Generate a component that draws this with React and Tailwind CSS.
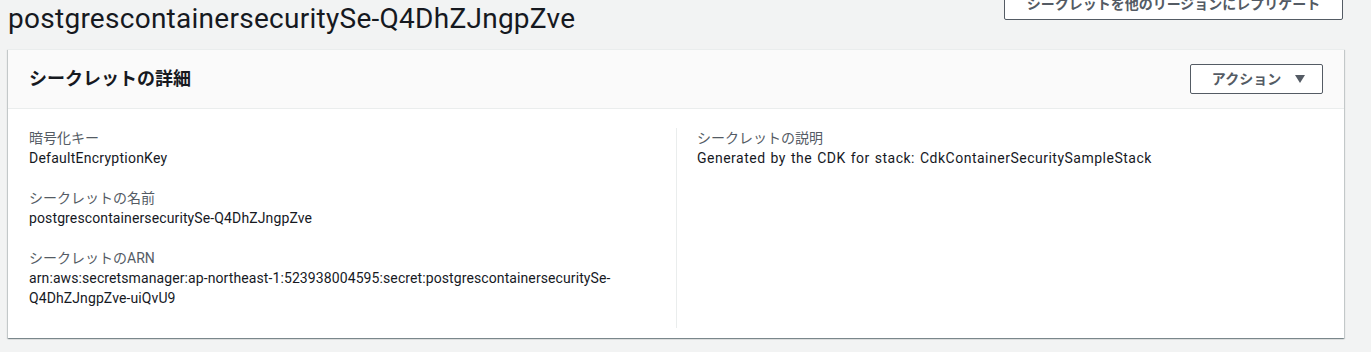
export default function App() {
  const font = { fontFamily: 'Roboto, "Noto Sans CJK JP", sans-serif' };
  return (
    <div className="min-h-[352px] w-[1371px] bg-[#f2f3f3] pl-[8px] pr-[27px] text-[#16191f]" style={font}>
      <div className="flex items-start justify-between">
        <h1 className="mt-[2px] text-[28px] leading-[34px] font-normal tracking-[0.27px] text-[#16191f]">
          postgrescontainersecuritySe-Q4DhZJngpZve
        </h1>
        <button className="-mt-[12px] mr-[1px] flex h-[32px] w-[339px] items-center justify-center rounded-[2px] border border-[#545b64] bg-white text-[14px] font-bold text-[#545b64]">
          シークレットを他のリージョンにレプリケート
        </button>
      </div>
      <div className="mt-[13px] border-t border-[#eaeded] bg-white shadow-[0_1px_1px_0_rgba(0,28,36,0.3),1px_1px_1px_0_rgba(0,28,36,0.15),-1px_1px_1px_0_rgba(0,28,36,0.15)]">
        <div className="flex h-[59px] items-center justify-between border-b border-[#eaeded] bg-[#fafafa] px-[21px]">
          <h2 className="text-[18px] font-bold leading-[22px] text-[#16191f]">シークレットの詳細</h2>
          <button className="flex h-[30px] w-[133px] items-center justify-center gap-[14px] rounded-[2px] border border-[#545b64] bg-white pl-[4px] text-[14px] font-bold text-[#545b64]">
            <span>アクション</span>
            <svg width="10" height="8" viewBox="0 0 10 8"><path d="M0 0 L10 0 L5 8 Z" fill="#545b64" /></svg>
          </button>
        </div>
        <div className="grid grid-cols-2 px-[21px] pt-[19px] pb-[10px] text-[14px] leading-[20px]">
          <div className="flex flex-col gap-[20px] pr-[20px] pb-[20px]">
            <div>
              <div className="text-[#545b64]">暗号化キー</div>
              <div className="tracking-[0.25px]">DefaultEncryptionKey</div>
            </div>
            <div>
              <div className="text-[#545b64]">シークレットの名前</div>
              <div className="tracking-[0.12px]">postgrescontainersecuritySe-Q4DhZJngpZve</div>
            </div>
            <div>
              <div className="text-[#545b64]">シークレットのARN</div>
              <div className="tracking-[0.1px]">
                arn:aws:secretsmanager:ap-northeast-1:523938004595:secret:postgrescontainersecuritySe-
                <br />
                Q4DhZJngpZve-uiQvU9
              </div>
            </div>
          </div>
          <div className="border-l border-[#eaeded] pl-[20px]">
            <div className="text-[#545b64]">シークレットの説明</div>
            <div className="tracking-[0.5px] [word-spacing:1px]">Generated by the CDK for stack: CdkContainerSecuritySampleStack</div>
          </div>
        </div>
      </div>
    </div>
  );
}
